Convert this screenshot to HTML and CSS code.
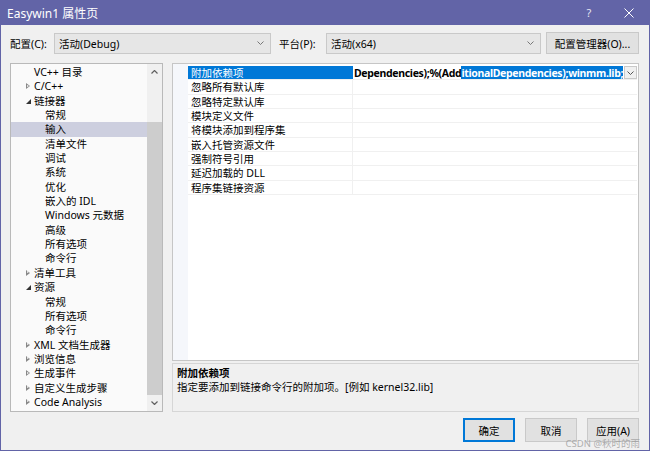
FILE: index.html
```html
<!DOCTYPE html>
<html lang="zh-CN">
  <head>
    <meta charset="UTF-8" />
    <title>Easywin1 属性页</title>
    <link rel="stylesheet" href="styles.css">
  </head>
  <body>
    <div class="window">
      <div class="titlebar">
        <span class="title">Easywin1 属性页</span>
        <span class="tb-btn help">?</span>
        <span class="tb-btn close">
          <svg width="10" height="10" viewBox="0 0 10 10"><path d="M0.5 0.5L9.5 9.5M9.5 0.5L0.5 9.5" stroke="#fff" stroke-width="1"/></svg>
        </span>
      </div>

      <div class="toolbar">
        <label class="tool-label">配置(C):</label>
        <div class="combo combo-config">
          <span>活动(Debug)</span>
          <svg class="chev" width="7" height="4" viewBox="0 0 7 4"><path d="M0.5 0.5L3.5 3.5L6.5 0.5" fill="none" stroke="#777" stroke-width="1"/></svg>
        </div>
        <label class="tool-label platform">平台(P):</label>
        <div class="combo combo-platform">
          <span>活动(x64)</span>
          <svg class="chev" width="7" height="4" viewBox="0 0 7 4"><path d="M0.5 0.5L3.5 3.5L6.5 0.5" fill="none" stroke="#777" stroke-width="1"/></svg>
        </div>
        <div class="button manager">配置管理器(O)...</div>
      </div>

      <div class="main">
        <div class="tree">
          <div class="tree-list">
            <div class="node l1">VC++ 目录</div>
            <div class="node l1 closed"><i class="arrow"></i>C/C++</div>
            <div class="node l1 open"><i class="arrow"></i>链接器</div>
            <div class="node l2">常规</div>
            <div class="node l2 selected">输入</div>
            <div class="node l2">清单文件</div>
            <div class="node l2">调试</div>
            <div class="node l2">系统</div>
            <div class="node l2">优化</div>
            <div class="node l2">嵌入的 IDL</div>
            <div class="node l2">Windows 元数据</div>
            <div class="node l2">高级</div>
            <div class="node l2">所有选项</div>
            <div class="node l2">命令行</div>
            <div class="node l1 closed"><i class="arrow"></i>清单工具</div>
            <div class="node l1 open"><i class="arrow"></i>资源</div>
            <div class="node l2">常规</div>
            <div class="node l2">所有选项</div>
            <div class="node l2">命令行</div>
            <div class="node l1 closed"><i class="arrow"></i>XML 文档生成器</div>
            <div class="node l1 closed"><i class="arrow"></i>浏览信息</div>
            <div class="node l1 closed"><i class="arrow"></i>生成事件</div>
            <div class="node l1 closed"><i class="arrow"></i>自定义生成步骤</div>
            <div class="node l1 closed"><i class="arrow"></i>Code Analysis</div>
          </div>
          <div class="scrollbar">
            <div class="sb-arrow">
              <svg width="7" height="4" viewBox="0 0 7 4"><path d="M0.5 3.5L3.5 0.5L6.5 3.5" fill="none" stroke="#606060" stroke-width="1.2"/></svg>
            </div>
            <div class="sb-track"><div class="sb-thumb"></div></div>
            <div class="sb-arrow">
              <svg width="7" height="4" viewBox="0 0 7 4"><path d="M0.5 0.5L3.5 3.5L6.5 0.5" fill="none" stroke="#606060" stroke-width="1.2"/></svg>
            </div>
          </div>
        </div>

        <div class="right">
          <div class="grid">
            <div class="gutter"></div>
            <div class="rows">
              <div class="prop selected">
                <div class="name">附加依赖项</div>
                <div class="value"><span class="plain">Dependencies);%(Add</span><span class="mark">itionalDependencies);winmm.lib;</span></div>
                <div class="drop">
                  <svg width="7" height="4" viewBox="0 0 7 4"><path d="M0.5 0.5L3.5 3.5L6.5 0.5" fill="none" stroke="#555" stroke-width="1"/></svg>
                </div>
              </div>
              <div class="prop"><div class="name">忽略所有默认库</div><div class="value"></div></div>
              <div class="prop"><div class="name">忽略特定默认库</div><div class="value"></div></div>
              <div class="prop"><div class="name">模块定义文件</div><div class="value"></div></div>
              <div class="prop"><div class="name">将模块添加到程序集</div><div class="value"></div></div>
              <div class="prop"><div class="name">嵌入托管资源文件</div><div class="value"></div></div>
              <div class="prop"><div class="name">强制符号引用</div><div class="value"></div></div>
              <div class="prop"><div class="name">延迟加载的 DLL</div><div class="value"></div></div>
              <div class="prop"><div class="name">程序集链接资源</div><div class="value"></div></div>
            </div>
          </div>
          <div class="desc">
            <div class="desc-title">附加依赖项</div>
            <div class="desc-text">指定要添加到链接命令行的附加项。[例如 kernel32.lib]</div>
          </div>
        </div>
      </div>

      <div class="footer">
        <div class="button default">确定</div>
        <div class="button">取消</div>
        <div class="button">应用(A)</div>
      </div>

      <div class="watermark">CSDN @秋时的雨</div>
    </div>
  </body>
</html>
```

FILE: styles.css
```css
html, body {
  margin: 0;
  padding: 0;
}
body {
  font-family: "Noto Sans", "Noto Sans CJK SC", sans-serif;
  font-size: 10.5px;
  color: #000;
  background: #f0f0f0;
}
.window {
  position: relative;
  width: 650px;
  height: 451px;
  box-sizing: border-box;
  border: 1px solid #6264a7;
  border-top: none;
  background: #f0f0f0;
  display: flex;
  flex-direction: column;
}
.titlebar {
  height: 25px;
  background: #6264a7;
  color: #fff;
  display: flex;
  align-items: center;
  font-size: 12px;
  margin: 0 -1px;
}
.title {
  margin-left: 7px;
  flex: 1;
}
.tb-btn {
  width: 38px;
  display: flex;
  justify-content: center;
  align-items: center;
}
.help {
  font-size: 11px;
  color: #e6e6f2;
  margin-right: 2px;
}
.close {
  margin-right: 2px;
}
.toolbar {
  display: flex;
  align-items: center;
  height: 22px;
  margin-top: 7px;
  padding-left: 9px;
}
.tool-label {
  width: 44px;
}
.tool-label.platform {
  width: 47px;
  margin-left: 8px;
}
.combo {
  height: 21px;
  box-sizing: border-box;
  border: 1px solid #c9c9c9;
  background: #e6e6e6;
  display: flex;
  align-items: center;
  padding: 0 5px 0 4px;
}
.combo span {
  flex: 1;
}
.combo .chev {
  margin-right: 1px;
}
.combo-config {
  width: 217px;
}
.combo-platform {
  width: 215px;
}
.button {
  height: 24px;
  box-sizing: border-box;
  border: 1px solid #c9c9c9;
  background: #e1e1e1;
  display: flex;
  align-items: center;
  justify-content: center;
}
.button.manager {
  width: 93px;
  height: 22px;
  margin-left: 5px;
}
.main {
  display: flex;
  margin-top: 9px;
  height: 349px;
  padding-left: 9px;
}
.tree {
  width: 153px;
  box-sizing: border-box;
  border: 1px solid #b9b9b9;
  background: #fafafa;
  display: flex;
}
.tree-list {
  flex: 1;
  padding-top: 1px;
  overflow: hidden;
}
.node {
  height: 14.35px;
  line-height: 14.35px;
  white-space: nowrap;
  position: relative;
}
.node.l1 {
  padding-left: 23px;
}
.node.l2 {
  padding-left: 34px;
}
.node.selected {
  background: #cdcfdf;
}
.arrow {
  position: absolute;
  left: 15px;
  top: 5px;
}
.closed .arrow {
  width: 0;
  height: 0;
  border-left: 4px solid #888;
  border-top: 3px solid transparent;
  border-bottom: 3px solid transparent;
  top: 4px;
}
.closed .arrow::after {
  content: "";
  position: absolute;
  left: -3px;
  top: -1.5px;
  border-left: 2px solid #fafafa;
  border-top: 1.5px solid transparent;
  border-bottom: 1.5px solid transparent;
}
.open .arrow {
  width: 0;
  height: 0;
  border-bottom: 5px solid #333;
  border-left: 5px solid transparent;
  top: 5px;
}
.scrollbar {
  width: 15px;
  background: #f0f0f0;
  display: flex;
  flex-direction: column;
}
.sb-arrow {
  height: 16px;
  display: flex;
  align-items: center;
  justify-content: center;
}
.sb-track {
  flex: 1;
  display: flex;
  flex-direction: column;
  padding: 42px 0 0 0;
}
.sb-thumb {
  flex: 1;
  background: #cdcdcd;
}
.right {
  width: 467px;
  margin-left: 9px;
  display: flex;
  flex-direction: column;
}
.grid {
  height: 298px;
  box-sizing: border-box;
  border: 1px solid #c6c6c6;
  background: #fff;
  display: flex;
}
.gutter {
  width: 15px;
  flex-shrink: 0;
  background: #f5f7fb;
}
.rows {
  flex: 1;
  min-width: 0;
  padding-top: 2px;
}
.prop {
  display: flex;
  height: 14.35px;
  line-height: 14px;
  box-sizing: border-box;
  border-bottom: 1px solid #f0f0f0;
  margin-right: 1px;
}
.prop .name {
  width: 161px;
  flex-shrink: 0;
  padding-left: 3px;
  border-right: 1px solid #f0f0f0;
  white-space: nowrap;
}
.prop.selected .name {
  background: #0078d7;
  color: #fff;
  border-right-color: #0078d7;
}
.prop .value {
  flex: 1;
  min-width: 0;
  overflow: hidden;
  white-space: nowrap;
  font-weight: bold;
  letter-spacing: -0.33px;
  padding-left: 1px;
}
.value .mark {
  background: #0078d7;
  color: #fff;
}
.drop {
  width: 13px;
  flex-shrink: 0;
  box-sizing: border-box;
  border: 1px solid #c9c9c9;
  background: #f0f0f0;
  display: flex;
  align-items: center;
  justify-content: center;
}
.desc {
  margin-top: 2px;
  height: 49px;
  box-sizing: border-box;
  border: 1px solid #d6d6d6;
  padding: 2px 4px;
  line-height: 14px;
}
.desc-title {
  font-weight: bold;
}
.footer {
  display: flex;
  justify-content: flex-end;
  gap: 10px;
  margin-top: 6px;
  padding-right: 10px;
}
.footer .button {
  width: 52px;
}
.footer .button.default {
  border: 1px solid #0078d7;
  box-shadow: inset 0 0 0 1px #0078d7;
}
.watermark {
  position: absolute;
  right: 9px;
  bottom: 0;
  font-size: 9.5px;
  line-height: 12px;
  color: rgba(150, 150, 150, 0.75);
}
```
